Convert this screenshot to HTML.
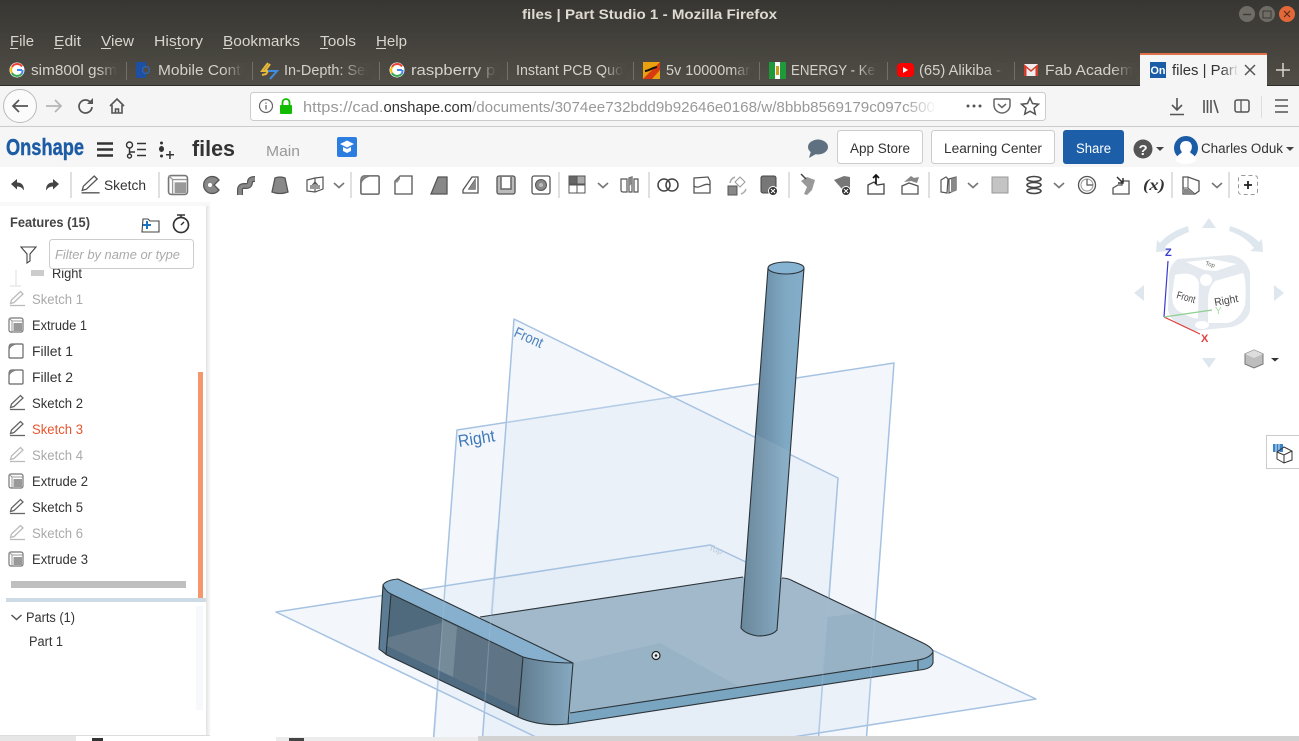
<!DOCTYPE html>
<html lang="en"><head><meta charset="utf-8"><title>files | Part Studio 1 - Mozilla Firefox</title>
<style>
html,body{margin:0;padding:0;width:1299px;height:741px;overflow:hidden;background:#fff}
svg{display:block;position:absolute;left:0;top:0}
text{font-family:"Liberation Sans",sans-serif}
.m{font-size:15px;fill:#d8d5cd}
.t{font-size:15px;fill:#d4d1ca}
.f{font-size:13.5px;fill:#333}
.g{fill:#aaa}
.btn{font-size:13.5px;fill:#333}
</style></head><body>
<svg width="1299" height="741" viewBox="0 0 1299 741" xmlns="http://www.w3.org/2000/svg">
<defs>
<linearGradient id="tb" x1="0" y1="0" x2="0" y2="1"><stop offset="0" stop-color="#383632"/><stop offset="1" stop-color="#514e47"/></linearGradient>
<linearGradient id="fd" x1="0" y1="0" x2="1" y2="0"><stop offset="0" stop-color="#4d4a44" stop-opacity="0"/><stop offset=".85" stop-color="#4d4a44"/></linearGradient>
<linearGradient id="fdw" x1="0" y1="0" x2="1" y2="0"><stop offset="0" stop-color="#f5f5f5" stop-opacity="0"/><stop offset=".9" stop-color="#f5f5f5"/></linearGradient>
<linearGradient id="fdu" x1="0" y1="0" x2="1" y2="0"><stop offset="0" stop-color="#fff" stop-opacity="0"/><stop offset="1" stop-color="#fff"/></linearGradient>
<linearGradient id="shd" x1="0" y1="0" x2="1" y2="0"><stop offset="0" stop-color="#e2e2e2"/><stop offset="1" stop-color="#fff"/></linearGradient>
<linearGradient id="cyl" x1="0" y1="0" x2="1" y2="0"><stop offset="0" stop-color="#59788d"/><stop offset=".3" stop-color="#6a8ba3"/><stop offset=".7" stop-color="#7fa8c3"/><stop offset="1" stop-color="#84aecb"/></linearGradient>
<linearGradient id="end" x1="0" y1="0" x2="1" y2="0"><stop offset="0" stop-color="#5f7a8d"/><stop offset="1" stop-color="#86aac2"/></linearGradient>
<g id="sk"><path d="M-7 6.500H8" stroke="#666" stroke-width="1.300" fill="none"/><path d="M-6.500 4.500L-5.500 1L3.500-7.500L6-5L-3 3.500Z" fill="none" stroke="#666" stroke-width="1.300"/></g>
<g id="skl"><path d="M-7 6.500H8" stroke="#bbb" stroke-width="1.300" fill="none"/><path d="M-6.500 4.500L-5.500 1L3.500-7.500L6-5L-3 3.500Z" fill="none" stroke="#bbb" stroke-width="1.300"/></g>
<g id="ex"><rect x="-7" y="-7" width="14" height="14" rx="2" fill="#fff" stroke="#777" stroke-width="1.200"/><path d="M-7-7L-4-4H6.500M-4-4V6.500" fill="none" stroke="#999"/><rect x="-2.500" y="-2" width="8.500" height="8" fill="#999"/></g>
<g id="fi"><path d="M-4-7H6Q7-7 7-6V6Q7 7 6 7H-6Q-7 7-7 6V-3Q-7-7-4-7Z" fill="#fff" stroke="#666" stroke-width="1.200"/><path d="M-7-1Q-6-5 0-7L-4-7Q-7-7-7-3Z" fill="#888" stroke="#777" stroke-width=".8"/></g>
<path id="cv" d="M-5-2L0 2.500L5-2" fill="none" stroke="#777" stroke-width="1.600"/>
</defs>

<!-- browser chrome -->
<rect width="1299" height="86" fill="url(#tb)"/>
<text x="522" y="19" font-size="14" font-weight="700" fill="#dfdbd2" textLength="255" lengthAdjust="spacingAndGlyphs">files | Part Studio 1 - Mozilla Firefox</text>
<circle cx="1247" cy="14" r="8" fill="#6f6c65"/><path d="M1243 14.500h8" stroke="#3c3a36" stroke-width="1.400"/>
<circle cx="1267" cy="14" r="8" fill="#6f6c65"/><rect x="1263" y="11" width="8" height="7" fill="none" stroke="#3c3a36"/>
<circle cx="1287" cy="14" r="8" fill="#e2683a"/><path d="M1284 11l6 6m0-6l-6 6" stroke="#5b2a18" stroke-width="1.200"/>

<text class="m" x="10" y="46" textLength="24" lengthAdjust="spacingAndGlyphs">File</text>
<text class="m" x="54" y="46" textLength="27" lengthAdjust="spacingAndGlyphs">Edit</text>
<text class="m" x="101" y="46" textLength="33" lengthAdjust="spacingAndGlyphs">View</text>
<text class="m" x="154" y="46" textLength="49" lengthAdjust="spacingAndGlyphs">History</text>
<text class="m" x="223" y="46" textLength="77" lengthAdjust="spacingAndGlyphs">Bookmarks</text>
<text class="m" x="320" y="46" textLength="36" lengthAdjust="spacingAndGlyphs">Tools</text>
<text class="m" x="376" y="46" textLength="31" lengthAdjust="spacingAndGlyphs">Help</text>
<g fill="#d8d5cd"><rect x="10" y="48" width="8" height="1"/><rect x="54" y="48" width="8" height="1"/><rect x="101" y="48" width="10" height="1"/><rect x="175" y="48" width="6" height="1"/><rect x="223" y="48" width="9" height="1"/><rect x="320" y="48" width="8" height="1"/><rect x="376" y="48" width="10" height="1"/></g>

<!-- tabs -->
<g stroke="#726f68"><path d="M126.500 62V80M252.500 62V80M379.500 62V80M507.500 62V80M633.500 62V80M759.500 62V80M887.500 62V80M1014.500 62V80"/></g>
<text class="t" x="31" y="75" textLength="86" lengthAdjust="spacingAndGlyphs">sim800l gsm</text>
<text class="t" x="158" y="75" textLength="86" lengthAdjust="spacingAndGlyphs">Mobile Conti</text>
<text class="t" x="284" y="75" textLength="86" lengthAdjust="spacingAndGlyphs">In-Depth: Ser</text>
<text class="t" x="411" y="75" textLength="88" lengthAdjust="spacingAndGlyphs">raspberry pi</text>
<text class="t" x="516" y="75" textLength="107" lengthAdjust="spacingAndGlyphs">Instant PCB Quo</text>
<text class="t" x="666" y="75" textLength="84" lengthAdjust="spacingAndGlyphs">5v 10000mar</text>
<text class="t" x="791" y="75" textLength="84" lengthAdjust="spacingAndGlyphs">ENERGY - Ke</text>
<text class="t" x="919" y="75" textLength="82" lengthAdjust="spacingAndGlyphs">(65) Alikiba -</text>
<text class="t" x="1045" y="75" textLength="88" lengthAdjust="spacingAndGlyphs">Fab Academ</text>
<g fill="url(#fd)"><rect x="98" y="63" width="22" height="17"/><rect x="224" y="63" width="22" height="17"/><rect x="340" y="63" width="32" height="17"/><rect x="476" y="63" width="24" height="17"/><rect x="604" y="63" width="22" height="17"/><rect x="732" y="63" width="22" height="17"/><rect x="858" y="63" width="22" height="17"/><rect x="986" y="63" width="22" height="17"/><rect x="1112" y="63" width="24" height="17"/></g>
<!-- favicons -->
<g id="gl"><circle cx="17" cy="70" r="7.500" fill="#fff"/><path d="M22 70h-5" stroke="#4285f4" stroke-width="2"/><path d="M22 66.500A6 6 0 0 0 12 67" fill="none" stroke="#ea4335" stroke-width="2"/><path d="M12 67a6 6 0 0 0 0 6" fill="none" stroke="#fbbc05" stroke-width="2"/><path d="M12 73a6 6 0 0 0 9.500 1" fill="none" stroke="#34a853" stroke-width="2"/><path d="M21.500 74a6 6 0 0 0 1-4" fill="none" stroke="#4285f4" stroke-width="2"/></g>
<use href="#gl" x="380"/>
<rect x="136" y="62" width="10" height="16" fill="#1d4fa3"/><path d="M140 70h10" stroke="#1d4fa3" stroke-width="3"/><circle cx="146" cy="70" r="3.500" fill="#4f4c45" stroke="#2a66c0" stroke-width="1.200"/>
<path d="M268 63l-6 8h6l-2 3 -4 1M270 64l-5 7" fill="none" stroke="#e8b93a" stroke-width="2"/><path d="M268 71h9l-7 8" fill="none" stroke="#3f8de0" stroke-width="2"/>
<rect x="643" y="62" width="17" height="17" fill="#e8a010"/><path d="M643 79L660 62V70L652 79Z" fill="#d83a10"/><path d="M645 71c4 0 6-3 12-4" stroke="#111" stroke-width="2" fill="none"/>
<rect x="769" y="62" width="17" height="17" fill="#fff"/><rect x="769" y="62" width="6" height="17" fill="#1f9a3a"/><rect x="780" y="62" width="6" height="17" fill="#1f9a3a"/><rect x="776" y="66" width="3" height="9" fill="#c8a020"/>
<rect x="897" y="63" width="17" height="14" rx="4" fill="#f00"/><path d="M903 67l5 3-5 3z" fill="#fff"/>
<rect x="1024" y="64" width="14" height="12" fill="#eee"/><path d="M1024 64l7 6 7-6v12h-2.500v-8l-4.500 4-4.500-4v8h-2.500z" fill="#d43c2c"/>
<!-- active tab -->
<rect x="1140" y="55" width="127" height="31" fill="#f5f5f5"/><rect x="1140" y="53" width="127" height="2" fill="#e0704a"/>
<rect x="1150" y="62" width="16" height="16" fill="#1b5ca6"/><text x="1150.500" y="74" font-size="11" font-weight="700" fill="#fff" textLength="15" lengthAdjust="spacingAndGlyphs">On</text>
<text x="1172" y="75" font-size="15" fill="#333" textLength="66" lengthAdjust="spacingAndGlyphs">files | Part</text>
<rect x="1222" y="60" width="18" height="22" fill="url(#fdw)"/>
<path d="M1245 65l10 10m0-10l-10 10" stroke="#555" stroke-width="1.500"/>
<path d="M1283 63v14M1276 70h14" stroke="#d8d5cd" stroke-width="1.500"/>

<!-- nav bar -->
<rect y="86" width="1299" height="41" fill="#f5f5f5"/><rect y="126" width="1299" height="1" fill="#ccc"/><rect y="85" width="1140" height="1" fill="#2f2d2a"/><rect x="1267" y="85" width="32" height="1" fill="#2f2d2a"/>
<circle cx="20" cy="106" r="16.500" fill="#fbfbfb" stroke="#bbb"/>
<path d="M28 106H13M19 100l-6 6 6 6" fill="none" stroke="#555" stroke-width="1.700"/>
<path d="M61 106H46M55 100l6 6-6 6" fill="none" stroke="#b5b5b5" stroke-width="1.700"/>
<path d="M91 103a6.500 6.500 0 1 0 1 4" fill="none" stroke="#555" stroke-width="1.700"/><path d="M93 98v6h-6z" fill="#555"/>
<path d="M110 106l7-7 7 7M112 105v8h10v-8M115.500 113v-4h3v4" fill="none" stroke="#555" stroke-width="1.600"/>
<rect x="250.500" y="92.500" width="795" height="28" rx="3" fill="#fff" stroke="#ccc"/>
<circle cx="266" cy="106" r="6.500" fill="none" stroke="#666" stroke-width="1.200"/><path d="M266 105v4.500M266 102.500v1.300" stroke="#666" stroke-width="1.300"/>
<rect x="280" y="105" width="12" height="9" rx="1" fill="#12bc00"/><path d="M282.500 105v-2.500a3.500 3.500 0 0 1 7 0v2.500" fill="none" stroke="#12bc00" stroke-width="1.800"/>
<text x="303" y="112" font-size="15" fill="#999" textLength="80.500" lengthAdjust="spacingAndGlyphs">https://cad.</text>
<text x="383.500" y="112" font-size="15" fill="#333" textLength="88.500" lengthAdjust="spacingAndGlyphs">onshape.com</text>
<text x="472" y="112" font-size="15" fill="#999" textLength="463" lengthAdjust="spacingAndGlyphs">/documents/3074ee732bdd9b92646e0168/w/8bbb8569179c097c500</text>
<rect x="905" y="94" width="32" height="25" fill="url(#fdu)"/>
<g fill="#555"><circle cx="968" cy="106" r="1.500"/><circle cx="974" cy="106" r="1.500"/><circle cx="980" cy="106" r="1.500"/></g>
<path d="M995 99h14q1 0 1 1v5a8 8 0 0 1-16 0v-5q0-1 1-1zM998 104l4 3.500 4-3.500" fill="none" stroke="#666" stroke-width="1.500"/>
<path d="M1030 98l2.500 5.500 6 .7-4.500 4 1.300 6-5.300-3-5.300 3 1.300-6-4.500-4 6-.7z" fill="none" stroke="#555" stroke-width="1.500"/>
<path d="M1177 98v12M1172 105l5 5 5-5M1170 114.500h14" fill="none" stroke="#555" stroke-width="1.600"/>
<path d="M1204 100v13M1207.500 100v13M1211 100v13M1214 100l4 13" fill="none" stroke="#555" stroke-width="1.600"/>
<rect x="1235" y="100" width="14" height="12" rx="2" fill="none" stroke="#555" stroke-width="1.500"/><path d="M1241 100v12" stroke="#555" stroke-width="1.300"/>
<path d="M1261.500 96v22" stroke="#ddd"/>
<path d="M1275 100h13M1275 106h13M1275 112h13" stroke="#555" stroke-width="1.600"/>

<!-- onshape header -->
<rect y="127" width="1299" height="40" fill="#f6f6f6"/>
<text x="6" y="155" font-size="23" font-weight="700" fill="#1d5ca4" stroke="#1d5ca4" stroke-width=".4" textLength="78" lengthAdjust="spacingAndGlyphs">Onshape</text>
<path d="M97 143.500h16M97 149.500h16M97 155.500h16" stroke="#333" stroke-width="2.500"/>
<g fill="none" stroke="#333" stroke-width="1.400"><circle cx="129.500" cy="145" r="3"/><circle cx="129.500" cy="156" r="2"/><path d="M129.500 148v6M137 143.500h9M137 149.500h9M137 155.500h9M130 152h5"/></g>
<g fill="#333"><circle cx="161.500" cy="143" r="1.500"/><ellipse cx="161.500" cy="149" rx="2.500" ry="3"/><circle cx="161.500" cy="156" r="1.500"/><path d="M166 154h8v1.500h-8zM169.200 151h1.500v8h-1.500z"/></g>
<text x="192" y="156" font-size="22" font-weight="700" fill="#333" textLength="43" lengthAdjust="spacingAndGlyphs">files</text>
<text x="266" y="156" font-size="15" fill="#999" textLength="34" lengthAdjust="spacingAndGlyphs">Main</text>
<rect x="337" y="137" width="20" height="20" rx="2" fill="#2b7de0"/><path d="M340 144l7-3.500 7 3.500-7 3.500zM343 147v4l4 2 4-2v-4l-4 2z" fill="#fff"/>
<ellipse cx="818" cy="147" rx="10" ry="7.500" fill="#5f7180"/><path d="M811 151l-2 7 7-4z" fill="#5f7180"/>
<rect x="837.500" y="130.500" width="85" height="33" rx="3" fill="#fff" stroke="#ccc"/>
<text class="btn" x="850" y="153" textLength="60" lengthAdjust="spacingAndGlyphs">App Store</text>
<rect x="931.500" y="130.500" width="123" height="33" rx="3" fill="#fff" stroke="#ccc"/>
<text class="btn" x="944" y="153" textLength="98" lengthAdjust="spacingAndGlyphs">Learning Center</text>
<rect x="1063" y="130" width="61" height="34" rx="3" fill="#1c5ea8"/>
<text x="1076" y="153" font-size="13.500" fill="#fff" textLength="35" lengthAdjust="spacingAndGlyphs">Share</text>
<circle cx="1143" cy="149" r="9.500" fill="#555"/><text x="1138.500" y="155" font-size="15" font-weight="700" fill="#f6f6f6">?</text>
<path d="M1156 147h8l-4 4z" fill="#444"/>
<circle cx="1186" cy="148" r="12" fill="#1b5ca6"/><path d="M1176 161c0-6 5-7 6-9-3-3-3-11 4-11s7 8 4 11c1 2 6 3 6 9q-10 6-20 0z" fill="#fff"/>
<text x="1201" y="153" font-size="13.500" fill="#333" textLength="82" lengthAdjust="spacingAndGlyphs">Charles Oduk</text>
<path d="M1286 147h8l-4 4z" fill="#444"/>

<!-- 3D viewport planes -->
<g fill="#dbe6f2" fill-opacity=".32" stroke="#a6c2e2" stroke-width="1.500" stroke-linejoin="round">
<path d="M457 430L894 363L866 745H433Z"/>
<path d="M514 319L838 478L818 745H482Z"/>
<path d="M276 612L710 545L1036 699L780 739H540Z"/>
</g>
<text transform="translate(513 336) rotate(24)" font-size="15" fill="#4a80bd" textLength="30" lengthAdjust="spacingAndGlyphs">Front</text>
<text transform="translate(459 447) rotate(-9)" font-size="17" fill="#3f78b8" textLength="37" lengthAdjust="spacingAndGlyphs">Right</text>
<text transform="translate(708 550) rotate(18)" font-size="9" fill="#b9cbdd">Top</text>

<!-- solid -->
<path d="M480 617L743 577L782 578Q788 578 793 581L923 643Q933 648 933 652Q930 658 918 660L570 713L540 700L518 640Z" fill="#a1b9ca"/>
<path d="M660 643L740 687L570 713L573 663Z" fill="#99b3c6"/>
<path d="M827 617L860 613L923 643Q933 648 933 652Q930 658 918 660L822 675Z" fill="#97b2c5"/>
<path d="M570 713L918 660Q930 658 933 652V663Q931 669 920 670L568 724Z" fill="#79a5c1"/>
<path d="M480 617L743 577M782 578Q788 578 793 581L923 643Q933 648 933 652V663Q931 669 920 670L568 724M570 713L918 660Q930 658 933 652M918 660V670" fill="none" stroke="#2b3338" stroke-width="1.100"/>
<!-- cylinder -->
<path d="M768 268L741 628Q745 634 758 636Q772 636 777 630L804 268Z" fill="url(#cyl)"/>
<path d="M755 434L791 452L777 630Q772 636 758 636Q745 634 741 628Z" fill="#b8cbd8" fill-opacity=".18"/>
<path d="M768 268L741 628Q745 634 758 636Q772 636 777 630L804 268" fill="none" stroke="#2b3338" stroke-width="1.100"/>
<ellipse cx="786" cy="268" rx="18" ry="6" fill="#86b3d2" stroke="#2b3338" stroke-width="1.100"/>
<!-- wall -->
<path d="M383 585L391 594L386 655L379 648Z" fill="#5b7c94"/>
<path d="M391 594L523 657L518 717L386 655Z" fill="#5f7484"/>
<path d="M391 594L443 620L441 623L387 638Z" fill="#4f6a7d"/>
<path d="M387 638L441 623L438 670L387 646Z" fill="#647a8a"/>
<path d="M443 620L457 627L453 677L438 670Z" fill="#758b9a"/>
<path d="M387 646L518 708V717L386 655Z" fill="#4f6c82"/>
<path d="M523 657Q545 663 573 663L568 724Q540 727 518 717Z" fill="url(#end)"/>
<path d="M383 585Q386 580 398 579L573 663Q545 663 523 657L391 594Q385 590 383 585Z" fill="#86b0cd"/>
<path d="M383 585Q386 580 398 579L573 663L568 724Q540 727 518 717L387 655L379 649ZM383 585Q385 591 391 594L523 657Q545 663 573 663M391 594L386 655M523 657L518 717" fill="none" stroke="#2b3338" stroke-width="1.100" stroke-linejoin="round"/>
<!-- planes faint over solid -->
<g fill="none" stroke="#a6c2e2" stroke-width="1.200" opacity=".35"><path d="M497 530L482 741M447 560L434 741M832 550L818 741M880 550L866 741"/></g>
<circle cx="656" cy="655.500" r="4" fill="#e8eef2" stroke="#222" stroke-width="1.200"/><circle cx="656" cy="655.500" r="1.300" fill="#222"/>

<!-- gizmo -->
<g fill="#dfe7ee"><path d="M1209 218l-7 10h14zM1202 358h14l-7 10zM1134 293l10-8v16zM1284 293l-10-8v16z"/>
<path d="M1188 226Q1169 232 1160 243l-3-3-1 12 13-1-4-4Q1173 238 1189 232zM1230 226Q1249 232 1259 242l3-3 1 13-13-1 4-3Q1245 236 1229 231z"/></g>
<path d="M1178 259L1230 255Q1245 257 1250 272L1250 310Q1248 322 1232 327L1195 331Q1172 326 1168 310L1169 275Q1170 264 1178 259Z" fill="#e3e9ef"/>
<g fill="#fff"><path d="M1186 262L1212 259L1237 264L1216 271L1204 270Z"/><path d="M1175 275Q1195 270 1199 283L1198 318Q1195 320 1180 312Q1172 308 1172 295Z"/><path d="M1215 281L1243 273Q1247 280 1245 305Q1240 320 1228 323L1208 323L1208 300Q1208 288 1215 281Z"/><circle cx="1206" cy="280" r="6"/><ellipse cx="1202" cy="325" rx="7" ry="4"/></g>
<text transform="translate(1176 298) rotate(16)" font-size="10.500" fill="#444" textLength="19" lengthAdjust="spacingAndGlyphs">Front</text>
<text transform="translate(1215 306) rotate(-10)" font-size="11" fill="#444" textLength="24" lengthAdjust="spacingAndGlyphs">Right</text>
<text transform="translate(1205 265) rotate(15)" font-size="6" fill="#666">Top</text>
<path d="M1164 317L1168 261" stroke="#3a3ad0" stroke-width="1.200"/>
<path d="M1164 317L1200 334" stroke="#e03a3a" stroke-width="1.200"/>
<path d="M1164 317L1212 310" stroke="#8fcf8f" stroke-width="1.200"/>
<text x="1165" y="256" font-size="11" font-weight="700" fill="#3a3ad0">Z</text>
<text x="1201" y="342" font-size="11" font-weight="700" fill="#e04040">X</text>
<text x="1215" y="314" font-size="10" fill="#a8dca8">Y</text>
<path d="M1245 354L1254 350L1263 354V364L1254 368L1245 364Z" fill="#bdbdbd" stroke="#777"/><path d="M1245 354L1254 358L1263 354L1254 350Z" fill="#ddd"/>
<path d="M1271 358h8l-4 3.500z" fill="#333"/>
<rect x="1266.500" y="435.500" width="40" height="33" fill="#fff" stroke="#ccc"/>
<rect x="1273" y="444" width="10" height="8" fill="#3a84cc"/><path d="M1276 444v8M1279 444v8" stroke="#fff" stroke-width=".8"/>
<path d="M1284 447L1292 451V460L1284 463L1277 459V452ZM1277 452L1284 455L1292 451M1284 455V463" fill="none" stroke="#333"/>

<!-- toolbar -->
<rect y="167" width="1299" height="35" fill="#fff"/>
<g stroke="#d5d5d5" stroke-width="1.500"><path d="M71 172V198M159 172V198M351 172V198M559 172V198M649 172V198M789 172V198M929 172V198M1172 172V198M1229 172V198"/></g>
<path d="M11 184l6-5v3.500c5 0 7 3 7 8-2-3-4-4-7-4v3z" fill="#444"/><path d="M59 184l-6-5v3.500c-5 0-7 3-7 8 2-3 4-4 7-4v3z" fill="#444"/>
<g transform="translate(90 185) scale(1.200)"><path d="M-7 6.500H8" stroke="#555" stroke-width="1.100" fill="none"/><path d="M-6.500 4.500L-5.500 1L3.500-7.500L6-5L-3 3.500Z" fill="none" stroke="#555" stroke-width="1.100"/></g>
<text x="104" y="190" font-size="13.500" fill="#333" textLength="42" lengthAdjust="spacingAndGlyphs">Sketch</text>
<use href="#ex" transform="translate(178 185) scale(1.350)"/>
<path d="M219 180a8.500 8.500 0 1 0 0 10l-5-5z" fill="#888" stroke="#555" stroke-width="1.300"/><circle cx="210" cy="185" r="2" fill="#fff"/>
<path d="M240 195V190Q240 186 244 186H246Q250 186 250 182Q250 179 255 179" fill="none" stroke="#555" stroke-width="6"/><path d="M240 195V190Q240 186 244 186H246Q250 186 250 182Q250 179 255 179" fill="none" stroke="#888" stroke-width="3.600"/>
<path d="M275 178Q280 176 285 178L288 192Q280 195 272 192Z" fill="#888" stroke="#555" stroke-width="1.300"/>
<g fill="none" stroke="#555" stroke-width="1.200"><path d="M307 180l8-2 8-1v12l-8 3-8-1z"/><path d="M315 178v14M311 187l4-5 4 5"/><rect x="310" y="185" width="10" height="4" fill="#999" stroke="none"/></g>
<use href="#cv" x="339" y="185"/>
<use href="#fi" transform="translate(370 185) scale(1.300)"/>
<path d="M400 176h12v18h-17v-13z" fill="#fff" stroke="#555" stroke-width="1.300"/><path d="M395 181l5-5v3l-3 4z" fill="#888"/>
<path d="M431 194L438 177H447V194Z" fill="#888" stroke="#555" stroke-width="1.300"/>
<path d="M463 193v-3l9-13h6v16zM469 189l6-9v9z" fill="#fff" stroke="#555" stroke-width="1.300"/><path d="M469 189l6-9v9z" fill="#888"/>
<rect x="497" y="176" width="18" height="18" rx="2" fill="#bbb" stroke="#555" stroke-width="1.300"/><path d="M501 177v12h10v-12" fill="#fff" stroke="#666" stroke-width="1.500"/>
<rect x="532" y="176" width="18" height="18" rx="2" fill="#fff" stroke="#555" stroke-width="1.300"/><circle cx="541" cy="185" r="5.500" fill="#888" stroke="#555"/><circle cx="541" cy="185" r="2" fill="#bbb"/>
<rect x="569" y="176" width="8" height="8" fill="#666" stroke="#555"/><rect x="577" y="176" width="8" height="8" fill="#aaa" stroke="#555"/><rect x="569" y="185" width="8" height="8" fill="#fff" stroke="#555"/><rect x="577" y="185" width="8" height="8" fill="#fff" stroke="#555"/>
<use href="#cv" x="603" y="185"/>
<path d="M621 179h6v13h-4q-2 0-2-2zM629 178l3-1v15h-3zM634 179h4v13h-4z" fill="#fff" stroke="#555" stroke-width="1.200"/><path d="M629 178l3-1v6l-3 4z" fill="#888"/>
<circle cx="664" cy="185" r="6" fill="none" stroke="#444" stroke-width="1.500"/><circle cx="672" cy="185" r="6" fill="none" stroke="#444" stroke-width="1.500"/>
<path d="M694 178l14-1 2 4v12h-16zM694 186c5 4 10-4 16-1" fill="#fff" stroke="#555" stroke-width="1.300"/>
<rect x="728" y="186" width="9" height="9" fill="#888" stroke="#555"/><path d="M740 177l5 5-5 5-5-5z" fill="#fff" stroke="#999"/><path d="M730 183a8 8 0 0 1 5-6M746 189a8 8 0 0 1-5 5" fill="none" stroke="#aaa" stroke-width="1.500"/>
<rect x="761" y="176" width="15" height="17" rx="2" fill="#777" stroke="#444"/><circle cx="773" cy="191" r="4.500" fill="#333" stroke="#fff"/><path d="M771 189l4 4m0-4l-4 4" stroke="#fff"/>
<path d="M801 181l6-4 8 3-3 10-5 5-3-1 3-7z" fill="#999"/><path d="M801 174l5 5" stroke="#444" stroke-width="1.500"/>
<path d="M834 180l10-4 6 1v14l-8-2z" fill="#777"/><circle cx="846" cy="191" r="4.500" fill="#333" stroke="#fff"/><path d="M844 189l4 4m0-4l-4 4" stroke="#fff"/>
<path d="M868 185l6-3 3 3 7-1v10h-16z" fill="#fff" stroke="#444" stroke-width="1.300"/><path d="M876 175v9M873 178l3-3 3 3" fill="none" stroke="#111" stroke-width="1.700"/>
<path d="M902 186l7-3 9 3v8h-16z" fill="#fff" stroke="#555" stroke-width="1.300"/><path d="M904 182l7-6 3 2 5-1-2 6-6-2z" fill="#888"/>
<path d="M941 180l5-3 2 2-1 14-6-1zM949 179l7-2v13l-7 3z" fill="#fff" stroke="#555" stroke-width="1.200"/><path d="M951 179l5-2v13l-5 3z" fill="#888"/>
<use href="#cv" x="973" y="185"/>
<rect x="992" y="177" width="16" height="16" fill="#c4c4c4" stroke="#999"/>
<g fill="none" stroke="#444" stroke-width="1.600"><ellipse cx="1034" cy="179" rx="7" ry="2.500"/><ellipse cx="1034" cy="185" rx="7" ry="2.500"/><ellipse cx="1034" cy="191" rx="7" ry="2.500"/></g>
<use href="#cv" x="1059" y="185"/>
<circle cx="1087" cy="185" r="8.500" fill="none" stroke="#555" stroke-width="1.300"/><circle cx="1087" cy="185" r="6" fill="none" stroke="#999"/><path d="M1087 179v6h6" fill="none" stroke="#555" stroke-width="1.200"/>
<path d="M1113 188l5-3h4v-4h7v13h-16z" fill="#fff" stroke="#555" stroke-width="1.300"/><path d="M1117 177l6 6M1123 178v5h-5" fill="none" stroke="#333" stroke-width="1.500"/>
<text x="1143" y="190" font-size="16" font-weight="700" font-style="italic" fill="#333" style="font-family:'Liberation Serif',serif" textLength="22" lengthAdjust="spacingAndGlyphs">(x)</text>
<path d="M1183 177h5l11 4v10l-4 3h-12z" fill="#fff" stroke="#555" stroke-width="1.300"/><path d="M1188 177v11l7 6M1183 188h5" fill="none" stroke="#555"/><path d="M1184 189h4l6 5h-10z" fill="#888"/>
<use href="#cv" x="1217" y="185"/>
<rect x="1238.500" y="175.500" width="19" height="19" rx="3" fill="none" stroke="#999" stroke-dasharray="4 3"/><path d="M1244 185h8M1248 181v8" stroke="#222" stroke-width="1.800"/>

<!-- feature panel -->
<rect x="206" y="206" width="5" height="529" fill="url(#shd)"/>
<rect x="0" y="202" width="210" height="4" fill="#f8f8f8"/>
<rect x="0" y="206" width="206" height="529" fill="#fff"/>
<text x="10" y="227" font-size="13.500" font-weight="700" fill="#444" textLength="80" lengthAdjust="spacingAndGlyphs">Features (15)</text>
<path d="M143 219h5l2 2h9v11h-17z" fill="none" stroke="#444" stroke-width="1.100"/><path d="M147 221v8M143 225h8" stroke="#1b73c0" stroke-width="2"/>
<circle cx="181" cy="225" r="7.500" fill="none" stroke="#333" stroke-width="1.700"/><path d="M177 215h8M181 215v3M181 225l3-3" stroke="#333" stroke-width="1.500"/>
<path d="M21 247h15l-6 7v7l-3 2v-9z" fill="none" stroke="#444" stroke-width="1.100"/>
<rect x="49.500" y="239.500" width="144" height="29" rx="3" fill="#fff" stroke="#ccc"/>
<text x="55" y="259" font-size="13" font-style="italic" fill="#aaa" textLength="125" lengthAdjust="spacingAndGlyphs">Filter by name or type</text>
<svg x="0" y="269" width="196" height="12" viewBox="0 269 196 12"><text x="52" y="278" class="f" textLength="30" lengthAdjust="spacingAndGlyphs">Right</text><rect x="31" y="270" width="13" height="6" fill="#ccc"/></svg>
<path d="M16 270v16M10 286h11" stroke="#ddd"/>
<use href="#skl" x="17" y="299"/><text class="f g" x="32" y="304" textLength="51" lengthAdjust="spacingAndGlyphs">Sketch 1</text>
<use href="#ex" x="16" y="325"/><text class="f" x="32" y="330" textLength="55" lengthAdjust="spacingAndGlyphs">Extrude 1</text>
<use href="#fi" x="16" y="351"/><text class="f" x="32" y="356" textLength="41" lengthAdjust="spacingAndGlyphs">Fillet 1</text>
<use href="#fi" x="16" y="377"/><text class="f" x="32" y="382" textLength="41" lengthAdjust="spacingAndGlyphs">Fillet 2</text>
<use href="#sk" x="17" y="403"/><text class="f" x="32" y="408" textLength="51" lengthAdjust="spacingAndGlyphs">Sketch 2</text>
<use href="#sk" x="17" y="429"/><text class="f" x="32" y="434" style="fill:#e8552d" textLength="51" lengthAdjust="spacingAndGlyphs">Sketch 3</text>
<use href="#skl" x="17" y="455"/><text class="f g" x="32" y="460" textLength="51" lengthAdjust="spacingAndGlyphs">Sketch 4</text>
<use href="#ex" x="16" y="481"/><text class="f" x="32" y="486" textLength="56" lengthAdjust="spacingAndGlyphs">Extrude 2</text>
<use href="#sk" x="17" y="507"/><text class="f" x="32" y="512" textLength="51" lengthAdjust="spacingAndGlyphs">Sketch 5</text>
<use href="#skl" x="17" y="533"/><text class="f g" x="32" y="538" textLength="51" lengthAdjust="spacingAndGlyphs">Sketch 6</text>
<use href="#ex" x="16" y="559"/><text class="f" x="32" y="564" textLength="56" lengthAdjust="spacingAndGlyphs">Extrude 3</text>
<rect x="11" y="581" width="175" height="7" fill="#bfbfbf"/>
<rect x="198" y="372" width="5" height="226" fill="#f4976c"/>
<rect x="6" y="598" width="200" height="4" fill="#ccdbe5"/>
<rect x="196" y="606" width="7" height="104" fill="#f7f8f9"/>
<path d="M11.500 615l5 4.500 5-4.500" fill="none" stroke="#555" stroke-width="1.500"/>
<text class="f" x="26" y="622" textLength="49" lengthAdjust="spacingAndGlyphs">Parts (1)</text>
<text class="f" x="29" y="646" textLength="34" lengthAdjust="spacingAndGlyphs">Part 1</text>

<!-- bottom strip -->
<rect y="735" width="210" height="2" fill="#dcdcdc"/>
<rect y="736" width="76" height="5" fill="#e6e6e6"/><rect x="76" y="736" width="200" height="5" fill="#fff"/><rect x="92" y="738" width="11" height="3" fill="#333"/>
<rect x="276" y="737" width="202" height="4" fill="#ececec"/><rect x="289" y="738" width="15" height="3" fill="#444"/>
<rect x="478" y="736" width="821" height="5" fill="#d2d2d2"/>
</svg>
</body></html>
